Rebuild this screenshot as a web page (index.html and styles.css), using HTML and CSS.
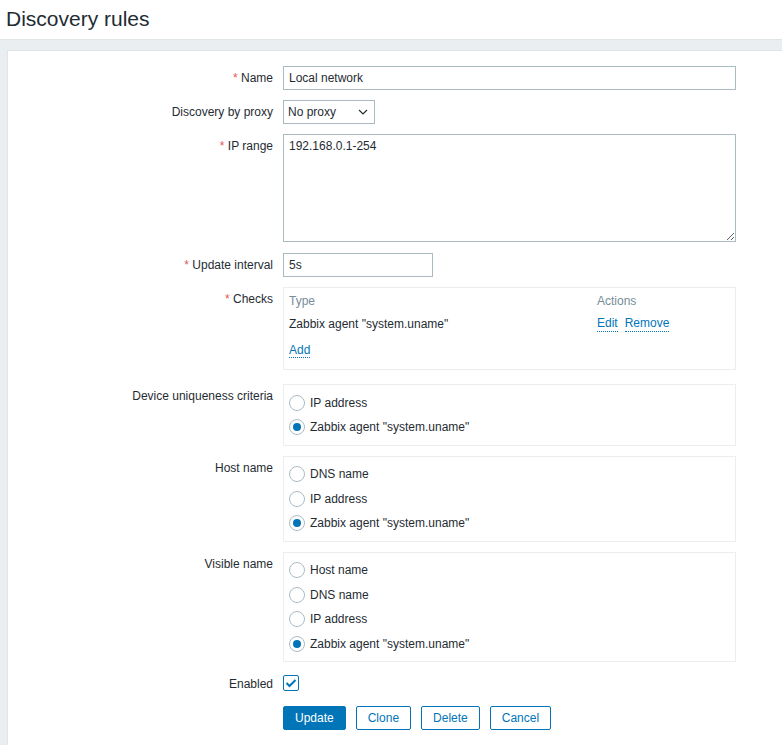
FILE: index.html
```html
<!DOCTYPE html>
<html>
<head>
<meta charset="utf-8">
<link rel="stylesheet" href="styles.css">
</head>
<body>
<header class="page-header">
  <h1 class="page-title">Discovery rules</h1>
</header>
<main class="wrapper">
  <section class="panel">
    <form class="form-grid">
      <label class="form-label"><span class="req">*</span> Name</label>
      <div class="field"><input class="text-input wide" type="text" value="Local network"></div>

      <label class="form-label">Discovery by proxy</label>
      <div class="field">
        <div class="select">
          <span>No proxy</span>
          <svg class="chevron" width="10" height="6" viewBox="0 0 10 6"><path d="M1 1 L5 5 L9 1" fill="none" stroke="#1f2c33" stroke-width="1.2"/></svg>
        </div>
      </div>

      <label class="form-label"><span class="req">*</span> IP range</label>
      <div class="field field-ta"><textarea class="textarea">192.168.0.1-254</textarea></div>

      <label class="form-label"><span class="req">*</span> Update interval</label>
      <div class="field"><input class="text-input short" type="text" value="5s"></div>

      <label class="form-label"><span class="req">*</span> Checks</label>
      <div class="field field-checks">
        <div class="box checks">
          <div class="checks-row head"><span class="col-type">Type</span><span class="col-act">Actions</span></div>
          <div class="checks-row data"><span class="col-type">Zabbix agent "system.uname"</span><span class="col-act"><a class="link">Edit</a><a class="link">Remove</a></span></div>
          <div class="checks-row add"><a class="link">Add</a></div>
        </div>
      </div>

      <label class="form-label">Device uniqueness criteria</label>
      <div class="field">
        <ul class="box radio-list">
          <li><span class="radio"></span>IP address</li>
          <li><span class="radio on"></span>Zabbix agent "system.uname"</li>
        </ul>
      </div>

      <label class="form-label">Host name</label>
      <div class="field">
        <ul class="box radio-list">
          <li><span class="radio"></span>DNS name</li>
          <li><span class="radio"></span>IP address</li>
          <li><span class="radio on"></span>Zabbix agent "system.uname"</li>
        </ul>
      </div>

      <label class="form-label">Visible name</label>
      <div class="field">
        <ul class="box radio-list">
          <li><span class="radio"></span>Host name</li>
          <li><span class="radio"></span>DNS name</li>
          <li><span class="radio"></span>IP address</li>
          <li><span class="radio on"></span>Zabbix agent "system.uname"</li>
        </ul>
      </div>

      <label class="form-label">Enabled</label>
      <div class="field field-check">
        <span class="checkbox">
          <svg width="12" height="10" viewBox="0 0 12 10"><path d="M1.5 5 L4.5 8 L10.5 2" fill="none" stroke="#0275b8" stroke-width="2"/></svg>
        </span>
      </div>

      <div></div>
      <div class="field buttons">
        <button type="button" class="btn primary">Update</button>
        <button type="button" class="btn">Clone</button>
        <button type="button" class="btn">Delete</button>
        <button type="button" class="btn">Cancel</button>
      </div>
    </form>
  </section>
</main>
</body>
</html>
```

FILE: styles.css
```css
* { box-sizing: border-box; }
html, body {
  margin: 0;
  padding: 0;
  background: #ebeef0;
  font-family: "Liberation Sans", Arial, sans-serif;
  font-size: 12px;
  color: #1f2c33;
  overflow: hidden;
}
.page-header {
  background: #fff;
  height: 40px;
  border-bottom: 1px solid #dfe4e7;
  padding-left: 6px;
}
.page-title {
  margin: 0;
  font-size: 21px;
  font-weight: normal;
  line-height: 38px;
  color: #1f2c33;
}
.wrapper {
  padding: 10px 0 0 7px;
}
.panel {
  background: #fff;
  border: 1px solid #dfe4e7;
  border-right: none;
  padding: 15px 0 20px 0;
}
.form-grid {
  display: grid;
  grid-template-columns: 265px 453px;
  column-gap: 10px;
  row-gap: 10px;
  margin: 0;
}
.form-label {
  text-align: right;
  padding-top: 5px;
  line-height: 14px;
  white-space: nowrap;
}
.req { color: #e45959; }
.field { min-height: 24px; }
.text-input {
  height: 24px;
  border: 1px solid #acbbc2;
  padding: 0 5px;
  font: inherit;
  color: #1f2c33;
  background: #fff;
  outline: none;
  display: block;
}
.wide { width: 453px; }
.short { width: 150px; }
.select {
  width: 92px;
  height: 24px;
  border: 1px solid #acbbc2;
  display: flex;
  align-items: center;
  justify-content: space-between;
  padding: 0 5px 0 4px;
}
.chevron { margin-right: 1px; }
.field-ta { margin-bottom: 1px; }
.textarea {
  display: block;
  width: 453px;
  height: 108px;
  border: 1px solid #acbbc2;
  padding: 4px 5px;
  font: inherit;
  line-height: 14px;
  color: #1f2c33;
  resize: both;
  outline: none;
  margin: 0;
}
.field-checks { margin-bottom: 4px; }
.box {
  border: 1px solid #ebeef0;
  margin: 0;
  list-style: none;
}
.checks {
  padding: 5px 5px 10px 5px;
  height: 83px;
}
.checks-row { display: flex; line-height: 16px; }
.checks-row.head { color: #768d99; }
.checks-row.data { margin-top: 7px; }
.checks-row.add { margin-top: 11px; }
.col-type { width: 308px; }
.col-act { display: flex; gap: 7px; }
.link {
  color: #0275b8;
  border-bottom: 1px dotted #0275b8;
  line-height: 14px;
  cursor: pointer;
}
.radio-list {
  padding: 5.5px 5px 5px 5px;
}
.radio-list li {
  height: 24.5px;
  display: flex;
  align-items: center;
}
.radio {
  width: 16px;
  height: 16px;
  border: 1px solid #acbbc2;
  border-radius: 50%;
  margin-right: 5px;
  display: flex;
  align-items: center;
  justify-content: center;
  flex: none;
}
.radio.on::after {
  content: "";
  width: 8px;
  height: 8px;
  border-radius: 50%;
  background: #0275b8;
}
.field-check { padding-top: 3px; }
.checkbox {
  width: 16px;
  height: 16px;
  border: 1px solid #0275b8;
  border-radius: 2px;
  display: flex;
  align-items: center;
  justify-content: center;
}
.buttons { display: flex; gap: 10px; }
.btn {
  height: 24px;
  padding: 0 11px;
  border: 1px solid #0275b8;
  border-radius: 2px;
  background: #fff;
  color: #0275b8;
  font: inherit;
  cursor: pointer;
}
.btn.primary {
  background: #0275b8;
  color: #fff;
}
```
